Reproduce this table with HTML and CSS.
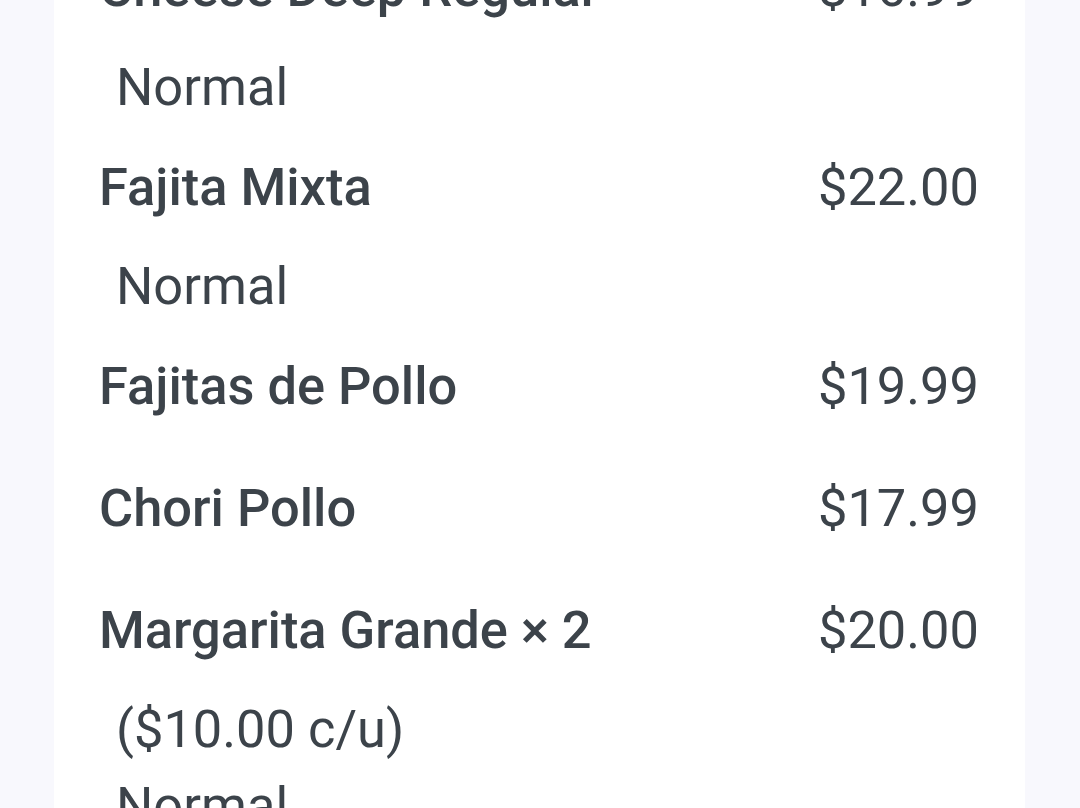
FILE: index.html
```html
<!DOCTYPE html>
<html lang="es">
<head>
<meta charset="utf-8">
<title>Pedido</title>
<link rel="stylesheet" href="styles.css">
</head>
<body>
<main class="card">
  <div class="row"><span class="name">Cheese Deep Regular</span><span class="price">$16.99</span></div>
  <div class="sub">Normal</div>
  <div class="row"><span class="name">Fajita Mixta</span><span class="price">$22.00</span></div>
  <div class="sub">Normal</div>
  <div class="row"><span class="name">Fajitas de Pollo</span><span class="price">$19.99</span></div>
  <div class="row"><span class="name">Chori Pollo</span><span class="price">$17.99</span></div>
  <div class="row"><span class="name">Margarita Grande × 2</span><span class="price">$20.00</span></div>
  <div class="sub">($10.00 c/u)</div>
  <div class="sub">Normal</div>
</main>
</body>
</html>
```
FILE: styles.css
```css
html, body {
  margin: 0;
  padding: 0;
  background: #f8f8fd;
  height: 100%;
  overflow: hidden;
}
body {
  font-family: Roboto, "Liberation Sans", sans-serif;
  color: #3c434a;
  font-size: 52.4px;
}
.card {
  background: #ffffff;
  margin: -73px 55px 0 54px;
  padding: 0 46px 0 45px;
  min-height: 1200px;
}
.row {
  display: flex;
  justify-content: space-between;
  align-items: baseline;
  padding: 22px 0;
  line-height: 78px;
}
.name {
  font-weight: 500;
}
.price {
  font-weight: 400;
}
.sub {
  line-height: 77px;
  padding-left: 17px;
  font-weight: 400;
}
```
